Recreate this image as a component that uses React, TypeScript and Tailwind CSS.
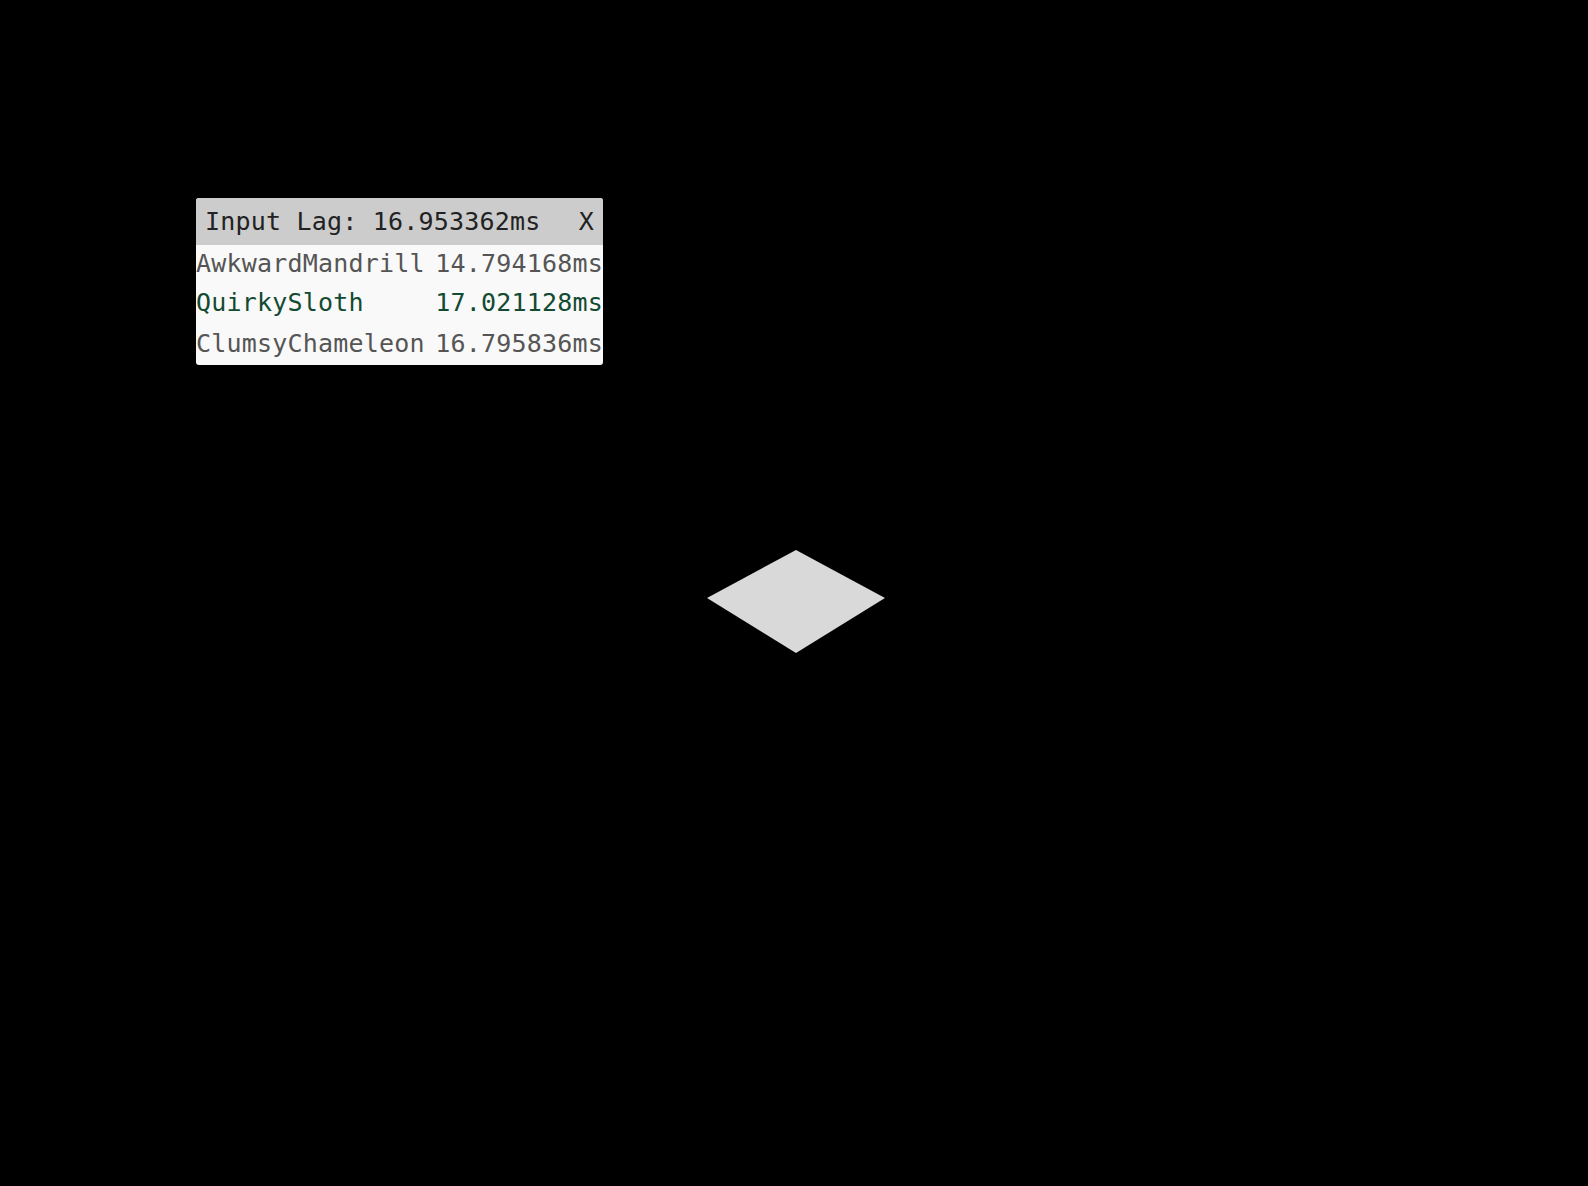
const PLAYERS = [
  { name: 'AwkwardMandrill', lag: '14.794168ms', self: false, h: 'h-[36px]' },
  { name: 'QuirkySloth', lag: '17.021128ms', self: true, h: 'h-[41px]' },
  { name: 'ClumsyChameleon', lag: '16.795836ms', self: false, h: 'h-[41px]' },
];

export default function App() {
  return (
    <div
      className="w-[1588px] h-[1186px] bg-black relative overflow-hidden"
      style={{ fontFamily: '"DejaVu Sans Mono", "Liberation Mono", monospace' }}
    >
      <div className="absolute left-[196px] top-[198px] w-[407px] rounded-[3px] overflow-hidden bg-[#f9f9f9] text-[25px] tracking-[0.2px]">
        <div className="h-[47px] bg-[#cccccc] text-[#222222] flex items-center justify-between pl-[9px] pr-[9px]">
          <span>Input Lag: 16.953362ms</span>
          <button className="text-[#222222]">X</button>
        </div>
        <table className="w-full border-collapse">
          <tbody>
            {PLAYERS.map((p) => (
              <tr key={p.name} className={p.self ? 'text-[#124a32]' : 'text-[#555555]'}>
                <td className={`${p.h} p-0 text-left whitespace-nowrap`}>{p.name}</td>
                <td className={`${p.h} p-0 text-right whitespace-nowrap`}>{p.lag}</td>
              </tr>
            ))}
          </tbody>
        </table>
      </div>

      <svg className="absolute left-[707px] top-[550px]" width="178" height="103" viewBox="0 0 178 103">
        <polygon points="89,0 178,48 89,103 0,48" fill="#d9d9d9" />
      </svg>
    </div>
  );
}
